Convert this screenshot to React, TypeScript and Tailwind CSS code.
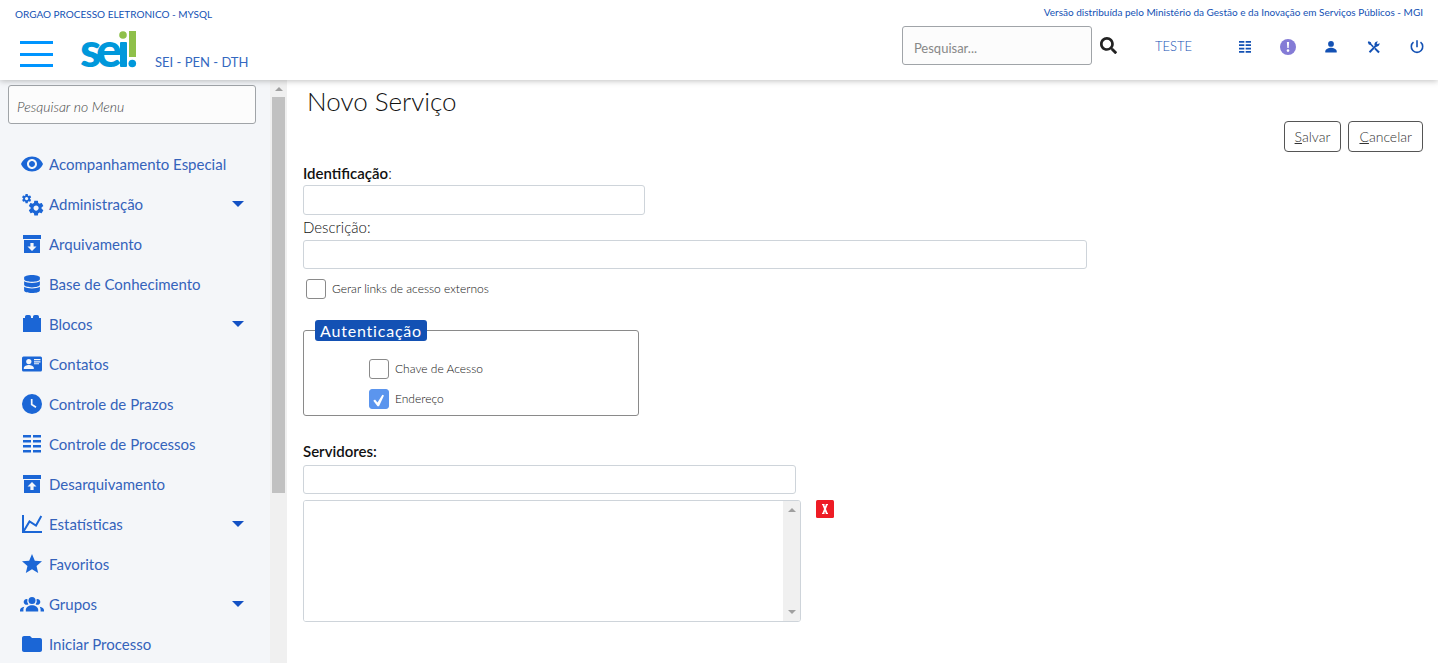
import type { ReactNode } from "react";
import { FaSearch, FaDatabase } from "react-icons/fa";

type IconProps = { className?: string };

function Svg({ className = "size-6", children, box = "0 0 24 24" }: IconProps & { children: ReactNode; box?: string }) {
  return (
    <svg viewBox={box} className={className} fill="currentColor" aria-hidden="true">
      {children}
    </svg>
  );
}

const EyeIcon = () => (
  <Svg>
    <path d="M12 4.5C7 4.5 2.73 7.61 1 12c1.73 4.39 6 7.5 11 7.5s9.27-3.11 11-7.5c-1.73-4.39-6-7.5-11-7.5zM12 17c-2.76 0-5-2.24-5-5s2.24-5 5-5 5 2.24 5 5-2.24 5-5 5zm0-8c-1.66 0-3 1.34-3 3s1.34 3 3 3 3-1.34 3-3-1.34-3-3-3z" />
  </Svg>
);

const gear =
  "M19.43 12.98c.04-.32.07-.64.07-.98s-.03-.66-.07-.98l2.11-1.65c.19-.15.24-.42.12-.64l-2-3.46c-.12-.22-.39-.3-.61-.22l-2.49 1c-.52-.4-1.08-.73-1.69-.98l-.38-2.65C14.46 2.18 14.25 2 14 2h-4c-.25 0-.46.18-.49.42l-.38 2.65c-.61.25-1.17.59-1.69.98l-2.49-1c-.23-.09-.49 0-.61.22l-2 3.46c-.13.22-.07.49.12.64l2.11 1.65c-.04.32-.07.65-.07.98s.03.66.07.98l-2.11 1.65c-.19.15-.24.42-.12.64l2 3.46c.12.22.39.3.61.22l2.49-1c.52.4 1.08.73 1.69.98l.38 2.65c.03.24.24.42.49.42h4c.25 0 .46-.18.49-.42l.38-2.65c.61-.25 1.17-.59 1.69-.98l2.49 1c.23.09.49 0 .61-.22l2-3.46c.12-.22.07-.49-.12-.64l-2.11-1.65zM12 15.5c-1.93 0-3.5-1.57-3.5-3.5s1.57-3.5 3.5-3.5 3.5 1.57 3.5 3.5-1.57 3.5-3.5 3.5z";

const GearsIcon = () => (
  <Svg>
    <path d={gear} transform="translate(1.1 1.1) scale(.46)" />
    <path d={gear} transform="translate(7.2 7.2) scale(.74)" />
  </Svg>
);

const ArchiveIcon = () => (
  <Svg>
    <path d="M3 3h18v4H3z" />
    <path fillRule="evenodd" d="M4 8h16v13H4zM10.4 11v3.4H7.5L12 19l4.5-4.6h-2.9V11z" />
  </Svg>
);

const UnarchiveIcon = () => (
  <Svg>
    <path d="M3 3h18v4H3z" />
    <path fillRule="evenodd" d="M4 8h16v13H4zM10.4 18v-3.4H7.5L12 10l4.5 4.6h-2.9V18z" />
  </Svg>
);

const DatabaseIcon = () => <FaDatabase className="size-[18px]" aria-hidden="true" />;

const BlockIcon = () => (
  <Svg>
    <path d="M3 6h2V4.800q0-1.800 1.800-1.800h2.400Q11 3 11 4.800V6h2V4.800Q13 3 14.800 3h2.400Q19 3 19 4.800V6h2v14H3z" />
  </Svg>
);

const ContactIcon = () => (
  <Svg>
    <path d="M3.500 4.500h17A1.500 1.500 0 0 1 22 6v12a1.500 1.500 0 0 1-1.500 1.500h-17A1.500 1.500 0 0 1 2 18V6a1.500 1.500 0 0 1 1.500-1.500z" />
    <g fill="#f4f6f9">
      <circle cx="8.800" cy="9.600" r="2.600" />
      <path d="M3.800 17v-1c0-2 3-3 5-3s5 1 5 3v1z" />
      <path d="M14 7h6.500v1.300H14zM14 9.200h6.500v1.200H14zM14 11.200h5v1h-5z" />
    </g>
  </Svg>
);

const ClockIcon = () => (
  <Svg>
    <circle cx="12" cy="12" r="10" />
    <path d="M11.700 7v5.500l4.300 2.700" fill="none" stroke="#f4f6f9" strokeWidth="1.700" />
  </Svg>
);

const ListIcon = ({ className }: IconProps) => (
  <Svg className={className}>
    <path d="M3 3h8v2.600H3zM13 3h8v2.600h-8zM3 8h8v2.600H3zM13 8h8v2.600h-8zM3 13h8v2.600H3zM13 13h8v2.600h-8zM3 18h8v2.600H3zM13 18h8v2.600h-8z" />
  </Svg>
);

const ChartIcon = () => (
  <Svg>
    <path d="M3 3v17h19M3.500 19.500L9.500 9.500l6.500 4L21.300 4" fill="none" stroke="currentColor" strokeWidth="2" />
  </Svg>
);

const StarIcon = () => (
  <Svg>
    <path d="M12 17.270L18.180 21l-1.640-7.030L22 9.240l-7.190-.61L12 2 9.190 8.630 2 9.240l5.460 4.730L5.820 21z" />
  </Svg>
);

const GroupIcon = () => (
  <Svg>
    <circle cx="12" cy="8.500" r="3.500" />
    <path d="M5.800 19.500v-1.700c0-2.800 3.200-4.600 6.200-4.600s6.200 1.800 6.200 4.600v1.700z" />
    <path d="M7.500 7.200a2.900 2.900 0 1 0 .9 5A5.200 5.200 0 0 1 7.500 7.200zM16.500 7.200a2.900 2.900 0 1 1-.9 5 5.200 5.200 0 0 0 .9-5z" />
    <path d="M0 19.500v-1.300c0-1.800 1.700-3.200 4.300-3.500-.7 1-.9 2-.9 3v1.800zM24 19.500v-1.300c0-1.800-1.700-3.200-4.300-3.500.7 1 .9 2 .9 3v1.800z" />
  </Svg>
);

const FolderIcon = () => (
  <Svg>
    <path d="M10 4H4c-1.100 0-2 .9-2 2v12c0 1.100.9 2 2 2h16c1.100 0 2-.9 2-2V8c0-1.100-.9-2-2-2h-8z" />
  </Svg>
);

const AlertIcon = () => (
  <Svg className="size-4 text-[#847bd6]" box="0 0 16 16">
    <circle cx="8" cy="8" r="8" />
    <path d="M6.900 3h2.200l-.4 6H7.300z" fill="#fff" />
    <circle cx="8" cy="11.600" r="1.300" fill="#fff" />
  </Svg>
);

const PersonIcon = () => (
  <Svg className="size-4" box="0 0 16 16">
    <circle cx="8" cy="4.900" r="2.900" />
    <path d="M2.300 13.600v-1.300c0-2.200 3.500-3.500 5.700-3.500s5.700 1.300 5.700 3.500v1.300z" />
  </Svg>
);

const ToolsIcon = () => (
  <Svg className="size-4" box="0 0 16 16">
    <path d="M3.500 13.200L11 5.600" fill="none" stroke="currentColor" strokeWidth="2" />
    <path d="M13.500 4.100l-1.700 1.200-1.100-1.100 1.200-1.700a2.900 2.900 0 0 0-3.300 3.900l1.200 1.100a2.900 2.900 0 0 0 3.700-3.400z" />
    <path d="M2.600 2.300l2.300 1 .6 1.600 2.400 2.300-1.200 1.200-2.300-2.500-1.600-.5-1-2.200zM9.600 8.700l4.200 4.100-1.500 1.400-4.100-4.100z" />
  </Svg>
);

const PowerIcon = () => (
  <Svg className="size-4" box="0 0 16 16">
    <path d="M8 1.200v7M4.500 3.200a5.700 5.700 0 1 0 7 0" fill="none" stroke="currentColor" strokeWidth="1.600" />
  </Svg>
);

const Logo = () => (
  <svg viewBox="0 -18 57 66" className="h-[66px] w-[57px]" role="img" aria-label="sei!">
    <g fill="#0098db" fontFamily="Lato, sans-serif" fontWeight="900" fontSize="48">
      <text x="0 16" y="37">se</text>
      <rect x="40" y="12" width="7" height="25" rx="1" />
    </g>
    <circle cx="43" cy="5" r="3.800" fill="#8fc04a" />
    <rect x="49" y="1" width="7" height="26" fill="#8fc04a" />
    <circle cx="52.300" cy="33.500" r="3.800" fill="#0098db" />
  </svg>
);

const menu = [
  { label: "Acompanhamento Especial", Icon: EyeIcon },
  { label: "Administração", Icon: GearsIcon, open: true },
  { label: "Arquivamento", Icon: ArchiveIcon },
  { label: "Base de Conhecimento", Icon: DatabaseIcon },
  { label: "Blocos", Icon: BlockIcon, open: true },
  { label: "Contatos", Icon: ContactIcon },
  { label: "Controle de Prazos", Icon: ClockIcon },
  { label: "Controle de Processos", Icon: ListIcon },
  { label: "Desarquivamento", Icon: UnarchiveIcon },
  { label: "Estatísticas", Icon: ChartIcon, open: true },
  { label: "Favoritos", Icon: StarIcon },
  { label: "Grupos", Icon: GroupIcon, open: true },
  { label: "Iniciar Processo", Icon: FolderIcon },
];

const actions = [
  { label: "Controle de Processos", icon: <ListIcon className="size-4" /> },
  { label: "Avisos", icon: <AlertIcon /> },
  { label: "Usuário", icon: <PersonIcon /> },
  { label: "Configurações", icon: <ToolsIcon /> },
  { label: "Sair", icon: <PowerIcon /> },
];

const Arrow = ({ down = false }: { down?: boolean }) => (
  <svg viewBox="0 0 8 4" className="h-1 w-2 shrink-0" fill="#a0a0a0" aria-hidden="true">
    <path d={down ? "M0 0h8L4 4z" : "M0 4h8L4 0z"} />
  </svg>
);

function Check({ id, label, checked = false }: { id: string; label: string; checked?: boolean }) {
  return (
    <div className="flex items-center gap-1.5">
      <span className="grid size-5">
        <input
          id={id}
          type="checkbox"
          defaultChecked={checked}
          className="peer col-start-1 row-start-1 size-5 appearance-none rounded-[3px] border border-[#8a8a8a] bg-white checked:border-[#5b95ee] checked:bg-[#5b95ee]"
        />
        <svg viewBox="0 0 20 20" className="pointer-events-none invisible col-start-1 row-start-1 size-5 peer-checked:visible" aria-hidden="true">
          <path d="M4.300 11.800l1.700-1.200 2.500 2.900L13.400 5.800l1.600.6-5 10.800H8.500z" fill="#fff" />
        </svg>
      </span>
      <label htmlFor={id} className="text-[12px] leading-5 text-[#111]">{label}</label>
    </div>
  );
}

const field = "block rounded-[3px] border border-[#ced4da] bg-white px-2 text-sm outline-none";
const caption = "block pb-0.5 text-[15px] leading-[18px]";
const action = "h-[31px] rounded border border-[#555] bg-white px-2.5 text-sm text-[#333]";

export default function App() {
  return (
    <div className="flex h-screen flex-col overflow-hidden bg-white font-['Lato',sans-serif] font-light text-[#111]">
      <header className="z-10 flex h-20 shrink-0 justify-between bg-white px-[15px] text-[#1351b4] shadow-[0_1px_6px_rgba(0,0,0,0.25)]">
        <div>
          <p className="h-7 text-[10px] leading-7 font-normal">ORGAO PROCESSO ELETRONICO - MYSQL</p>
          <div className="flex h-[44px] pl-[5px]">
            <button type="button" aria-label="Menu" className="mt-[13px] mr-[27px] flex h-[26px] w-[33px] flex-col justify-between">
              <span className="h-[3px] w-full bg-[#0095ff]" />
              <span className="h-[3px] w-full bg-[#0095ff]" />
              <span className="h-[3px] w-full bg-[#0095ff]" />
            </button>
            <a href="#inicio" className="-mt-4 mr-[18px]"><Logo /></a>
            <span className="self-end text-[13px] leading-5 font-normal text-[#3468c0]">SEI - PEN - DTH</span>
          </div>
        </div>
        <div className="flex flex-col items-end">
          <p className="h-[26px] text-[10px] leading-6 font-normal">
            Versão distribuída pelo Ministério da Gestão e da Inovação em Serviços Públicos - MGI
          </p>
          <div className="flex h-[39px] items-center">
            <input
              type="text"
              aria-label="Pesquisar"
              placeholder="Pesquisar..."
              className="h-[39px] w-[190px] rounded-[3px] border border-[#a0a4a8] bg-[#fcfcfc] pt-1 pl-[11px] text-[13px] font-normal outline-none placeholder:text-[#888]"
            />
            <button type="button" aria-label="Buscar" className="mr-[38px] ml-2 text-[#222]">
              <FaSearch className="size-[17px]" />
            </button>
            <span className="mr-[45px] pt-0.5 text-[13px]">TESTE</span>
            <nav aria-label="Ações" className="-mr-0.5 flex gap-[27px] pt-0.5">
              {actions.map((a) => (
                <a key={a.label} href="#acao" aria-label={a.label}>{a.icon}</a>
              ))}
            </nav>
          </div>
        </div>
      </header>

      <div className="flex min-h-0 flex-1">
        <aside className="flex w-[287px] shrink-0 overflow-hidden bg-[#f4f6f9]">
          <div className="flex-1 pt-[5px]">
            <div className="pr-[14px] pl-2">
              <input
                type="text"
                aria-label="Pesquisar no Menu"
                placeholder="Pesquisar no Menu"
                className="block h-[39px] w-full rounded-[3px] border border-[#a0a4a8] bg-[#fcfcfc] pt-[3px] pl-2 text-[14px] outline-none placeholder:text-[#444] placeholder:italic"
              />
            </div>
            <ul className="mt-5">
              {menu.map(({ label, Icon, open }) => (
                <li key={label}>
                  <a href="#menu" className="flex h-10 items-center pr-[26px] pl-5 text-[#3563bb]">
                    <span className="flex w-6 justify-center text-[#1b66d6]"><Icon /></span>
                    <span className="ml-[5px] flex-1 text-[15px] font-normal">{label}</span>
                    {open && (
                      <svg viewBox="0 0 12 6" className="h-1.5 w-3" fill="#1351c4" aria-hidden="true">
                        <path d="M0 0h12L6 6z" />
                      </svg>
                    )}
                  </a>
                </li>
              ))}
            </ul>
          </div>
          <div className="flex w-[17px] flex-col items-center bg-[#f0f0f0]" aria-hidden="true">
            <div className="flex h-[17px] shrink-0 items-center"><Arrow /></div>
            <div className="min-h-0 w-full flex-1 px-0.5"><div className="h-[70%] bg-[#c1c1c1]" /></div>
          </div>
        </aside>

        <main className="min-w-0 flex-1 pr-[15px] pl-4">
          <h1 className="pt-[5px] pb-[1px] pl-1 text-[26px] leading-8">Novo Serviço</h1>
          <div className="mt-[3px] flex justify-end gap-[7px]">
            <button type="button" className={action}><u>S</u>alvar</button>
            <button type="button" className={action}><u>C</u>ancelar</button>
          </div>
          <form className="mt-3" onSubmit={(e) => e.preventDefault()}>
            <label htmlFor="ident" className={caption}><b className="font-semibold">Identificação</b>:</label>
            <input id="ident" type="text" className={`${field} mt-[1px] h-[30px] w-[30.5%]`} />
            <label htmlFor="desc" className={`${caption} mt-[3px]`}>Descrição:</label>
            <input id="desc" type="text" className={`${field} mt-0.5 h-[29px] w-[70%]`} />
            <div className="mt-2.5 pl-[3px]"><Check id="links" label="Gerar links de acesso externos" /></div>

            <fieldset className="mt-[21px] w-[30%] min-w-[280px] rounded-[3px] border border-[#8a8a8a] pb-1.5">
              <legend className="ml-[11px] rounded-[3px] bg-[#1351b4] px-[5px] text-[16px] leading-[21px] font-normal tracking-wider text-white">
                Autenticação
              </legend>
              <div className="flex flex-col gap-2.5 pt-[18px] pl-[65px]">
                <Check id="chave" label="Chave de Acesso" />
                <Check id="endereco" label="Endereço" checked />
              </div>
            </fieldset>

            <label htmlFor="servidor" className={`${caption} mt-[26px] font-semibold`}>Servidores:</label>
            <input id="servidor" type="text" className={`${field} mt-[3px] h-[29px] w-[44%]`} />
            <div className="mt-1.5 flex items-start gap-[15px]">
              <div className="flex h-[122px] w-[44.5%] overflow-hidden rounded-[3px] border border-[#ced4da]">
                <select multiple aria-label="Lista de servidores" className="h-full min-w-0 flex-1 appearance-none overflow-hidden bg-white outline-none" />
                <div className="flex w-[17px] flex-col items-center justify-between bg-[#f0f0f0] py-[7px]" aria-hidden="true">
                  <Arrow />
                  <Arrow down />
                </div>
              </div>
              <button type="button" aria-label="Remover servidor">
                <svg viewBox="0 0 18 18" className="size-[18px]" aria-hidden="true">
                  <rect width="18" height="18" rx="1.500" fill="#ee1c25" />
                  <path d="M7.200 4.500l3.600 9M10.800 4.500l-3.600 9" stroke="#fff" strokeWidth="1.800" />
                  <path d="M6 4.500h2.500M9.800 4.500H12M6 13.500h2.500M9.800 13.500H12" stroke="#fff" strokeWidth="1" />
                </svg>
              </button>
            </div>
          </form>
        </main>
      </div>
    </div>
  );
}
